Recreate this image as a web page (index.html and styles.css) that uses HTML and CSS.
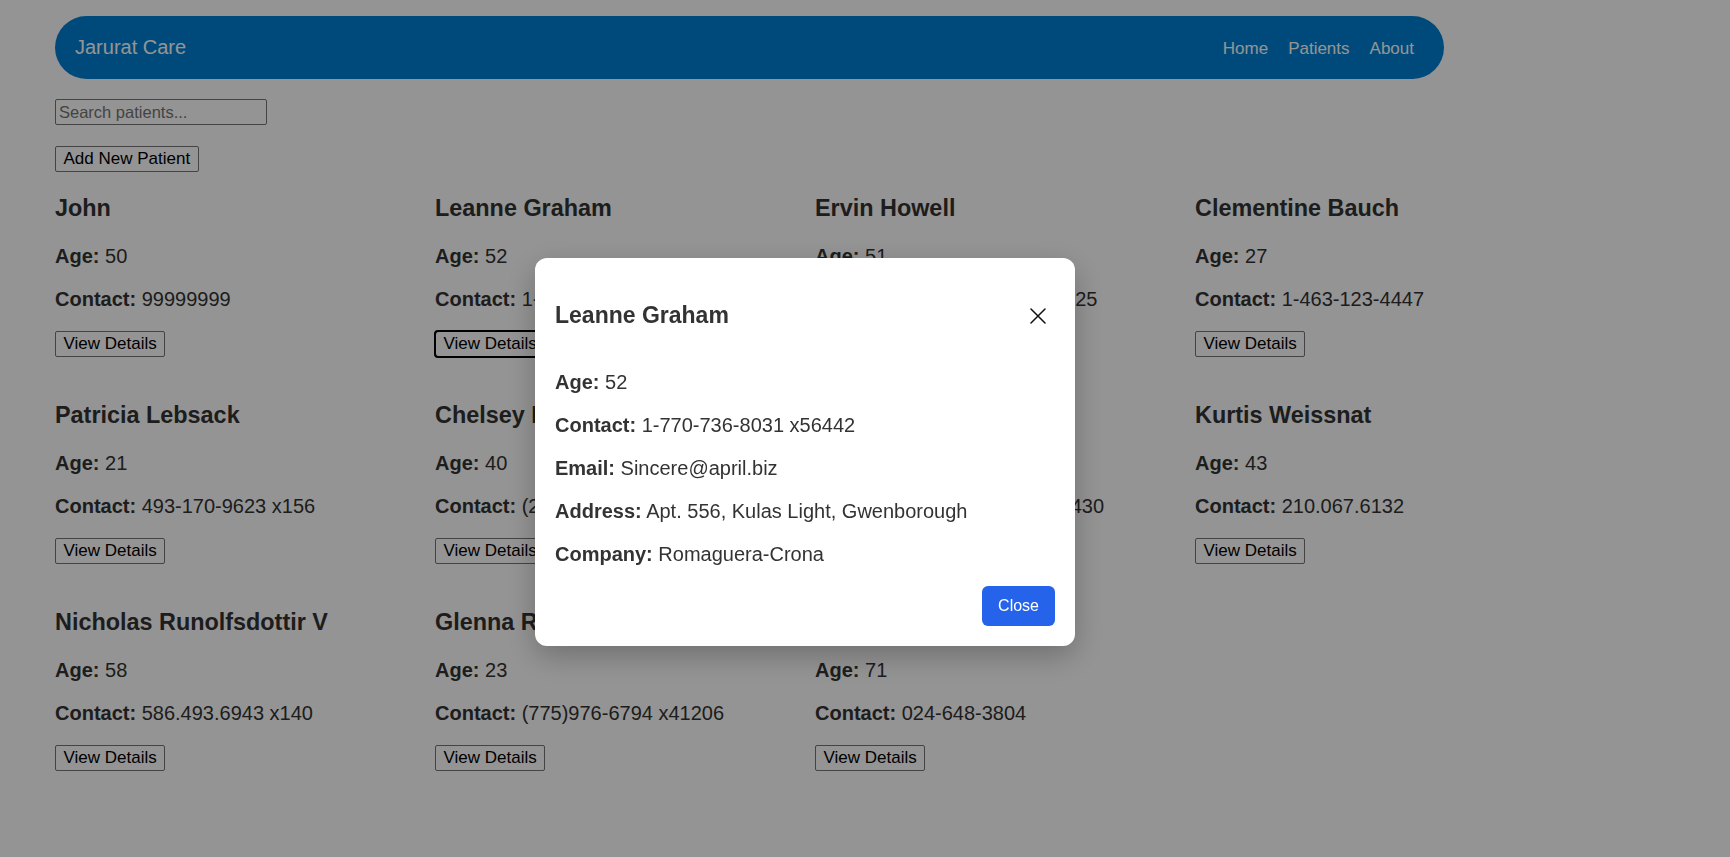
FILE: index.html
```html
<!DOCTYPE html>
<html lang="en">
<head>
<meta charset="utf-8">
<title>Jarurat Care</title>
<link rel="stylesheet" href="styles.css">
</head>
<body>
<div class="app">
  <nav class="navbar">
    <span class="brand">Jarurat Care</span>
    <div class="nav-links">
      <a href="#" class="nav-link">Home</a>
      <a href="#" class="nav-link">Patients</a>
      <a href="#" class="nav-link">About</a>
    </div>
  </nav>

  <input class="search" type="text" placeholder="Search patients...">
  <button class="btn add-btn">Add New Patient</button>

  <div class="grid">
    <div class="card">
      <h3>John</h3>
      <p><strong>Age:</strong> 50</p>
      <p><strong>Contact:</strong> 99999999</p>
      <button class="btn">View Details</button>
    </div>
    <div class="card">
      <h3>Leanne Graham</h3>
      <p><strong>Age:</strong> 52</p>
      <p><strong>Contact:</strong> 1-770-736-8031 x56442</p>
      <button class="btn is-focused">View Details</button>
    </div>
    <div class="card">
      <h3>Ervin Howell</h3>
      <p><strong>Age:</strong> 51</p>
      <p><strong>Contact:</strong> 010-692-6593 x09125</p>
      <button class="btn">View Details</button>
    </div>
    <div class="card">
      <h3>Clementine Bauch</h3>
      <p><strong>Age:</strong> 27</p>
      <p><strong>Contact:</strong> 1-463-123-4447</p>
      <button class="btn">View Details</button>
    </div>
    <div class="card">
      <h3>Patricia Lebsack</h3>
      <p><strong>Age:</strong> 21</p>
      <p><strong>Contact:</strong> 493-170-9623 x156</p>
      <button class="btn">View Details</button>
    </div>
    <div class="card">
      <h3>Chelsey Dietrich</h3>
      <p><strong>Age:</strong> 40</p>
      <p><strong>Contact:</strong> (254)954-1289</p>
      <button class="btn">View Details</button>
    </div>
    <div class="card">
      <h3>Mrs. Dennis Schulist</h3>
      <p><strong>Age:</strong> 34</p>
      <p><strong>Contact:</strong> 1-477-935-8478 x6430</p>
      <button class="btn">View Details</button>
    </div>
    <div class="card">
      <h3>Kurtis Weissnat</h3>
      <p><strong>Age:</strong> 43</p>
      <p><strong>Contact:</strong> 210.067.6132</p>
      <button class="btn">View Details</button>
    </div>
    <div class="card">
      <h3>Nicholas Runolfsdottir V</h3>
      <p><strong>Age:</strong> 58</p>
      <p><strong>Contact:</strong> 586.493.6943 x140</p>
      <button class="btn">View Details</button>
    </div>
    <div class="card">
      <h3>Glenna Reichert</h3>
      <p><strong>Age:</strong> 23</p>
      <p><strong>Contact:</strong> (775)976-6794 x41206</p>
      <button class="btn">View Details</button>
    </div>
    <div class="card">
      <h3>Clementina DuBuque</h3>
      <p><strong>Age:</strong> 71</p>
      <p><strong>Contact:</strong> 024-648-3804</p>
      <button class="btn">View Details</button>
    </div>
  </div>
</div>

<div class="overlay">
  <div class="modal">
    <div class="modal-header">
      <h3>Leanne Graham</h3>
      <button class="close-x" aria-label="Close">
        <svg width="16" height="16" viewBox="0 0 16 16" fill="none" stroke="#111" stroke-width="1.5" stroke-linecap="round">
          <path d="M1 1L15 15M15 1L1 15"/>
        </svg>
      </button>
    </div>
    <p><strong>Age:</strong> 52</p>
    <p><strong>Contact:</strong> 1-770-736-8031 x56442</p>
    <p><strong>Email:</strong> Sincere@april.biz</p>
    <p><strong>Address:</strong> Apt. 556, Kulas Light, Gwenborough</p>
    <p><strong>Company:</strong> Romaguera-Crona</p>
    <div class="modal-footer">
      <button class="close-btn">Close</button>
    </div>
  </div>
</div>
</body>
</html>
```

FILE: styles.css
```css
html, body {
  margin: 0;
  padding: 0;
  background: #ffffff;
}

body {
  font-family: "Liberation Sans", Arial, sans-serif;
  font-size: 20px;
  color: #333333;
}

.app {
  padding: 16px 55px 40px 55px;
}

.navbar {
  width: 1389px;
  height: 63px;
  box-sizing: border-box;
  border-radius: 32px;
  background: #0080d4;
  display: flex;
  align-items: center;
  justify-content: space-between;
  padding: 2px 30px 0 20px;
  margin-bottom: 20px;
}

.brand {
  color: #ffffff;
  font-size: 20px;
  margin-top: -2px;
}

.nav-links {
  display: flex;
  gap: 20px;
}

.nav-link {
  color: #ffffff;
  text-decoration: none;
  font-size: 17px;
}

.search {
  display: block;
  width: 212px;
  height: 26px;
  box-sizing: border-box;
  margin: 0 0 21px 0;
  padding: 1px 3px;
  font-family: "Liberation Sans", Arial, sans-serif;
  font-size: 16.5px;
  border: 1px solid #767676;
  border-radius: 2px;
  background: #ffffff;
  color: #000;
}

.search::placeholder {
  color: #757575;
}

.btn {
  display: block;
  font-family: "Liberation Sans", Arial, sans-serif;
  font-size: 17px;
  padding: 1px 7.5px;
  height: 25.5px;
  box-sizing: border-box;
  line-height: 1.15;
  border: 1px solid #767676;
  border-radius: 2px;
  background: #ffffff;
  color: #000;
}

.is-focused {
  outline: 2px solid #000;
  outline-offset: -1px;
  border-radius: 3px;
}

.grid {
  display: grid;
  grid-template-columns: repeat(4, 360px);
  column-gap: 20px;
  row-gap: 21.7px;
}

.card h3 {
  font-size: 23.4px;
  margin: 23.4px 0;
  line-height: 27px;
}

.card p {
  margin: 20px 0;
  line-height: 23px;
}

.overlay {
  position: fixed;
  inset: 0;
  background: rgba(0, 0, 0, 0.42);
}

.modal {
  position: absolute;
  left: 535px;
  top: 258px;
  width: 540px;
  box-sizing: border-box;
  padding: 20px;
  background: #ffffff;
  border-radius: 12px;
  box-shadow: 0 10px 30px rgba(0, 0, 0, 0.25);
}

.modal-header {
  display: flex;
  align-items: center;
  justify-content: space-between;
}

.modal-header h3 {
  font-size: 23px;
  line-height: 27px;
  margin: 24px 0 22px 0;
}

.close-x {
  width: 34px;
  height: 34px;
  padding: 9px;
  margin-top: 2px;
  border: none;
  background: transparent;
  display: flex;
  align-items: center;
  justify-content: center;
  box-sizing: border-box;
}

.modal p {
  margin: 20px 0;
  line-height: 23px;
}

.modal-footer {
  display: flex;
  justify-content: flex-end;
}

.close-btn {
  height: 40px;
  padding: 0 16px;
  font-family: "Liberation Sans", Arial, sans-serif;
  font-size: 16px;
  color: #ffffff;
  background: #2563eb;
  border: none;
  border-radius: 6px;
}
```
